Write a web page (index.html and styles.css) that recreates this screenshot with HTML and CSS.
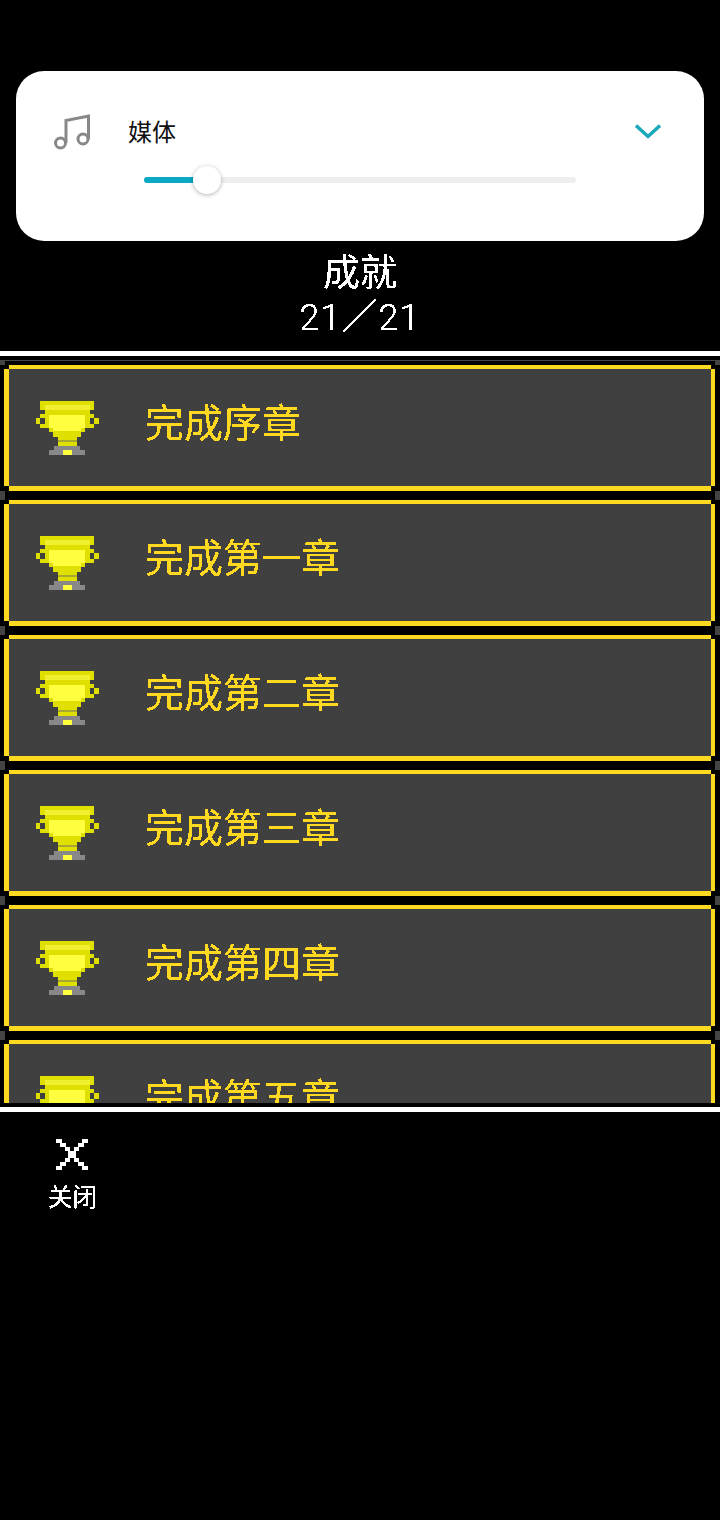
FILE: index.html
```html
<!DOCTYPE html>
<html lang="zh-CN">
<head>
    <meta charset="UTF-8">
    <meta name="viewport" content="width=device-width, initial-scale=1.0">
    <title>成就</title>
    <link rel="stylesheet" href="styles.css">
</head>
<body>
    <!-- hard edged text, like the bitmap font of the game -->
    <svg class="defs" width="0" height="0">
        <filter id="pixel" x="0" y="0" width="100%" height="100%" color-interpolation-filters="sRGB">
            <feComponentTransfer>
                <feFuncA type="discrete" tableValues="0 1 1"></feFuncA>
            </feComponentTransfer>
        </filter>
        <symbol id="trophy" viewBox="36 401 63 54">
            <g shape-rendering="crispEdges">
                <rect x="40" y="401" width="54" height="9" fill="#e0e000"/>
                <rect x="45" y="405" width="45" height="5" fill="#f0f030"/>
                <rect x="36" y="418" width="63" height="6" fill="#e0e000"/>
                <rect x="40" y="414" width="54" height="14" fill="#e0e000"/>
                <rect x="40" y="418" width="5" height="6" fill="#404040"/>
                <rect x="90" y="418" width="4" height="6" fill="#404040"/>
                <rect x="45" y="410" width="45" height="18" fill="#e0e000"/>
                <rect x="49" y="428" width="36" height="4" fill="#e0e000"/>
                <rect x="49" y="415" width="36" height="13" fill="#ffff40"/>
                <rect x="53" y="428" width="28" height="3" fill="#ffff40"/>
                <rect x="53" y="431" width="28" height="6" fill="#e0e000"/>
                <rect x="58" y="437" width="19" height="9" fill="#e0e000"/>
                <rect x="58" y="440" width="19" height="2" fill="#a8a830"/>
                <rect x="54" y="446" width="26" height="4" fill="#888888"/>
                <rect x="49" y="450" width="36" height="5" fill="#888888"/>
                <rect x="63" y="450" width="9" height="5" fill="#ffff40"/>
            </g>
        </symbol>
    </svg>

    <div class="volume-panel">
        <div class="volume-top">
            <svg class="note-icon" width="36" height="36" viewBox="0 0 36 36" fill="none" stroke="#888" stroke-width="3">
                <circle cx="6.500" cy="29" r="5"/>
                <circle cx="29" cy="25" r="5"/>
                <path d="M12 29V6.500L34.500 2V25"/>
            </svg>
            <span class="volume-label">媒体</span>
            <svg class="chevron" width="26" height="15" viewBox="0 0 26 15" fill="none" stroke="#1aa9b8" stroke-width="3.500">
                <path d="M1 1.500L13 12.500L25 1.500"/>
            </svg>
        </div>
        <div class="slider">
            <div class="slider-fill"></div>
            <div class="slider-thumb"></div>
        </div>
    </div>

    <div class="heading">
        <div class="heading-title">成就</div>
        <div class="heading-count">21／21</div>
    </div>

    <div class="list">
        <div class="ach"><div class="ach-body"><svg class="trophy"><use href="#trophy"/></svg><span class="ach-name">完成序章</span></div></div>
        <div class="ach"><div class="ach-body"><svg class="trophy"><use href="#trophy"/></svg><span class="ach-name">完成第一章</span></div></div>
        <div class="ach"><div class="ach-body"><svg class="trophy"><use href="#trophy"/></svg><span class="ach-name">完成第二章</span></div></div>
        <div class="ach"><div class="ach-body"><svg class="trophy"><use href="#trophy"/></svg><span class="ach-name">完成第三章</span></div></div>
        <div class="ach"><div class="ach-body"><svg class="trophy"><use href="#trophy"/></svg><span class="ach-name">完成第四章</span></div></div>
        <div class="ach"><div class="ach-body"><svg class="trophy"><use href="#trophy"/></svg><span class="ach-name">完成第五章</span></div></div>
    </div>

    <div class="footer">
        <div class="close-btn">
            <svg class="close-icon" width="32" height="32" viewBox="0 0 32 32" fill="#fff" shape-rendering="crispEdges">
                <path d="M0 0h6v4H0zM26 0h6v4h-6zM4 4h6v4H4zM22 4h6v4h-6zM9 8h5v4H9zM18 8h5v4h-5zM12 12h8v7h-8zM9 19h5v4H9zM18 19h5v4h-5zM4 23h6v4H4zM22 23h6v4h-6zM0 27h6v4H0zM26 27h6v4h-6z"/>
            </svg>
            <span class="close-label">关闭</span>
        </div>
    </div>
</body>
</html>
```

FILE: styles.css
```css
* {
    box-sizing: border-box;
}
body {
    margin: 0;
    height: 1520px;
    overflow: hidden;
    background-color: #000;
    padding-top: 71px;
    font-family: "Noto Sans CJK SC", "Noto Sans", sans-serif;
}
.defs {
    position: absolute;
}

/* volume popup */
.volume-panel {
    height: 170px;
    margin: 0 16px;
    padding: 43px 43px 0 38px;
    background-color: #fff;
    border-radius: 28px;
}
.volume-top {
    display: flex;
    align-items: center;
    height: 36px;
}
.note-icon {
    flex: none;
}
.volume-label {
    margin-left: 38px;
    margin-bottom: 4px;
    font-size: 24px;
    color: #111;
}
.chevron {
    margin-left: auto;
    margin-top: -1px;
}
.slider {
    position: relative;
    width: 432px;
    height: 6px;
    margin: 27px 0 0 90px;
    background-color: #eee;
    border-radius: 3px;
}
.slider-fill {
    width: 52px;
    height: 6px;
    background-color: #0ba9c4;
    border-radius: 3px;
}
.slider-thumb {
    position: absolute;
    left: 49px;
    top: -11px;
    width: 28px;
    height: 28px;
    background-color: #fff;
    border-radius: 50%;
    box-shadow: 0 1px 4px rgba(0, 0, 0, 0.3);
}

/* title */
.heading {
    height: 110px;
    padding-top: 6px;
    text-align: center;
    color: #fff;
    filter: url(#pixel);
}
.heading-title {
    height: 47px;
    font-size: 37px;
    line-height: 47px;
}
.heading-count {
    height: 47px;
    margin-top: 1px;
    font-family: Roboto, "Noto Sans CJK SC", sans-serif;
    font-size: 36px;
    font-weight: 300;
    line-height: 47px;
    letter-spacing: 1px;
}

/* achievements */
.list {
    display: flex;
    flex-direction: column;
    gap: 9px;
    height: 752px;
    padding-top: 9px;
    overflow: hidden;
    border-top: 5px solid #fff;
    background: linear-gradient(#000 4px, #444 4px, #444 5px, #000 5px) no-repeat;
    background-size: 100% 5px;
}
.ach {
    position: relative;
    flex: none;
    height: 126px;
    margin: 0 9px;
    border-top: 4px solid #ffd820;
    border-bottom: 5px solid #ffd820;
}
.ach::before,
.ach::after {
    content: "";
    position: absolute;
    top: -13px;
    width: 5px;
    height: 9px;
    background-color: #444;
}
.ach:first-child::before,
.ach:first-child::after {
    top: -9px;
    height: 5px;
}
.ach::before {
    left: -9px;
}
.ach::after {
    right: -9px;
}
.ach-body {
    display: flex;
    align-items: center;
    height: 117px;
    margin: 0 -4px 0 -5px;
    padding-left: 27px;
    border-left: 5px solid #ffd820;
    border-right: 4px solid #ffd820;
    background-color: #404040;
}
.trophy {
    flex: none;
    width: 63px;
    height: 54px;
}
.ach-name {
    margin-left: 46px;
    margin-bottom: 16px;
    font-size: 39px;
    color: #ffd820;
    filter: url(#pixel);
}

/* bottom bar */
.footer {
    border-top: 5px solid #fff;
    margin-top: 4px;
    padding: 27px 0 0 48px;
}
.close-btn {
    display: flex;
    flex-direction: column;
    align-items: center;
    width: 49px;
}
.close-icon {
    margin-left: -1px;
}
.close-label {
    margin-top: 7px;
    font-size: 24.500px;
    line-height: 36px;
    color: #fff;
    filter: url(#pixel);
}
```
